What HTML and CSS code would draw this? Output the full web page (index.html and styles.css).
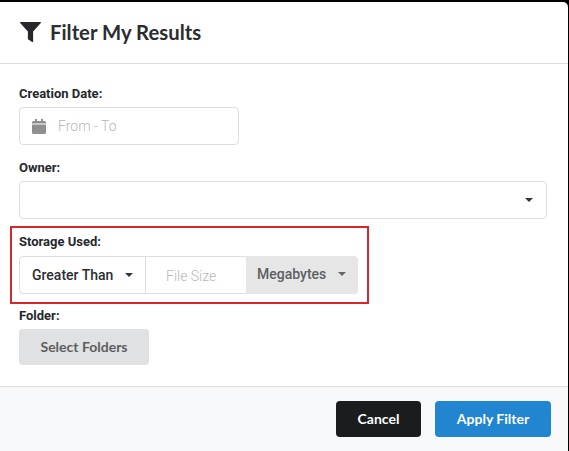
FILE: index.html
```html
<!DOCTYPE html>
<html lang="en">
<head>
<meta charset="UTF-8">
<meta name="viewport" content="width=device-width, initial-scale=1.0">
<title>Filter My Results</title>
<link rel="stylesheet" href="styles.css">
</head>
<body>
<div class="modal">
  <div class="modal-header">
    <svg class="filter-icon" width="21" height="21" viewBox="0 0 20 21" preserveAspectRatio="none"><path d="M0.5 0h19c.5 0 .6.5.3.9L12.5 9.5V19.5c0 .6-.5.8-1 .5L8 17.6c-.3-.2-.5-.5-.5-.9V9.5L.2.9C-.1.5 0 0 .5 0z"/></svg>
    <h1>Filter My Results</h1>
  </div>
  <form class="modal-body">
    <div class="field field-date">
      <label>Creation Date:</label>
      <div class="input date-input">
        <svg width="14" height="15" viewBox="0 0 14 15"><path fill="#8f8f8f" d="M0 5.5h14v8c0 .8-.6 1.5-1.5 1.5h-11C.6 15 0 14.300 0 13.500zM1.500 2H3V0h2v2h4V0h2v2h1.500C13.400 2 14 2.700 14 3.500V4.500H0V3.500C0 2.700.6 2 1.500 2z"/></svg>
        <span class="placeholder">From - To</span>
      </div>
    </div>
    <div class="field field-owner">
      <label>Owner:</label>
      <div class="input owner-select"><span class="caret"></span></div>
    </div>
    <div class="field field-storage">
      <label>Storage Used:</label>
      <div class="input-group">
        <div class="group-select">Greater Than<span class="caret"></span></div>
        <div class="group-size"><span class="placeholder">File Size</span></div>
        <div class="group-unit">Megabytes<span class="caret caret-grey"></span></div>
      </div>
    </div>
    <div class="field field-folder">
      <label>Folder:</label>
      <button type="button" class="btn btn-folders">Select Folders</button>
    </div>
  </form>
  <div class="modal-footer">
    <button type="button" class="btn btn-cancel">Cancel</button>
    <button type="button" class="btn btn-apply">Apply Filter</button>
  </div>
</div>
</body>
</html>
```

FILE: styles.css
```css
html, body {
  height: 100%;
}

body {
  margin: 0;
  padding: 2px 1px 0 0;
  box-sizing: border-box;
  background-color: #000;
  font-family: Roboto, sans-serif;
  overflow: hidden;
}

.modal {
  height: 449px;
  background-color: white;
  border-top-right-radius: 5px;
  display: flex;
  flex-direction: column;
}

.modal-header {
  height: 61px;
  padding: 0 19px 0 20px;
  border-bottom: 1px solid #dedede;
  display: flex;
  align-items: center;
  gap: 9px;
}

.filter-icon {
  fill: #26282b;
  flex: none;
}

h1 {
  margin: -2px 0 0;
  font-family: Lato, sans-serif;
  font-size: 20.3px;
  font-weight: 700;
  color: #2b2d30;
}

.modal-body {
  flex: 1;
  padding: 0 21px 0 19px;
}

label {
  display: block;
  font-size: 13px;
  font-weight: 700;
  line-height: 14px;
  color: #26282b;
  margin-bottom: 6px;
}

.field-date {
  padding-top: 23px;
}

.field-owner {
  padding-top: 16px;
}

.field-storage {
  margin: 7px 178px 0 -9px;
  padding: 7px 9px 8px 7px;
  border: 2px solid #d9262a;
}

.field-storage label {
  margin-bottom: 7px;
}

.field-folder {
  padding-top: 5px;
}

.input {
  height: 38px;
  box-sizing: border-box;
  border: 1px solid #dedede;
  border-radius: 4px;
  display: flex;
  align-items: center;
}

.date-input {
  width: 220px;
  padding-left: 12px;
  gap: 12px;
}

.placeholder {
  font-size: 14px;
  font-weight: 300;
  color: #b8b8b8;
}

.owner-select {
  justify-content: flex-end;
  padding-right: 13px;
}

.caret {
  display: inline-block;
  border-top: 4px solid #333;
  border-left: 4px solid transparent;
  border-right: 4px solid transparent;
}

.caret-grey {
  border-top-color: #666;
}

.input-group {
  display: flex;
  height: 38px;
}

.group-select {
  width: 127px;
  box-sizing: border-box;
  border: 1px solid #dedede;
  border-radius: 4px 0 0 4px;
  padding-left: 12px;
  display: flex;
  align-items: center;
  font-size: 14px;
  font-weight: 500;
  color: #2b2d30;
}

.group-select .caret {
  margin-left: 12px;
}

.group-size {
  width: 100px;
  box-sizing: border-box;
  border-top: 1px solid #dedede;
  border-bottom: 1px solid #dedede;
  padding: 2px 0 0 20px;
  display: flex;
  align-items: center;
}

.group-unit {
  width: 112px;
  box-sizing: border-box;
  background-color: #e6e6e6;
  border-radius: 0 4px 4px 0;
  padding: 0 0 2px 11px;
  display: flex;
  align-items: center;
  font-size: 14px;
  font-weight: 500;
  color: #5c5f63;
}

.group-unit .caret {
  margin-left: 12px;
}

.btn {
  border: none;
  border-radius: 4px;
  font-family: Lato, sans-serif;
  font-size: 14px;
  font-weight: 700;
  height: 36px;
  padding: 0 0 2px;
  cursor: pointer;
}

.btn-folders {
  width: 130px;
  background-color: #e0e1e2;
  color: #5c5e60;
}

.modal-footer {
  height: 65px;
  box-sizing: border-box;
  background-color: #f8f9fb;
  border-top: 1px solid #dedede;
  padding: 14px 17px 0 0;
  display: flex;
  justify-content: flex-end;
  align-items: flex-start;
  gap: 14px;
}

.btn-cancel {
  width: 85px;
  background-color: #1b1c1d;
  color: white;
}

.btn-apply {
  width: 116px;
  background-color: #2185d0;
  color: white;
}
```
